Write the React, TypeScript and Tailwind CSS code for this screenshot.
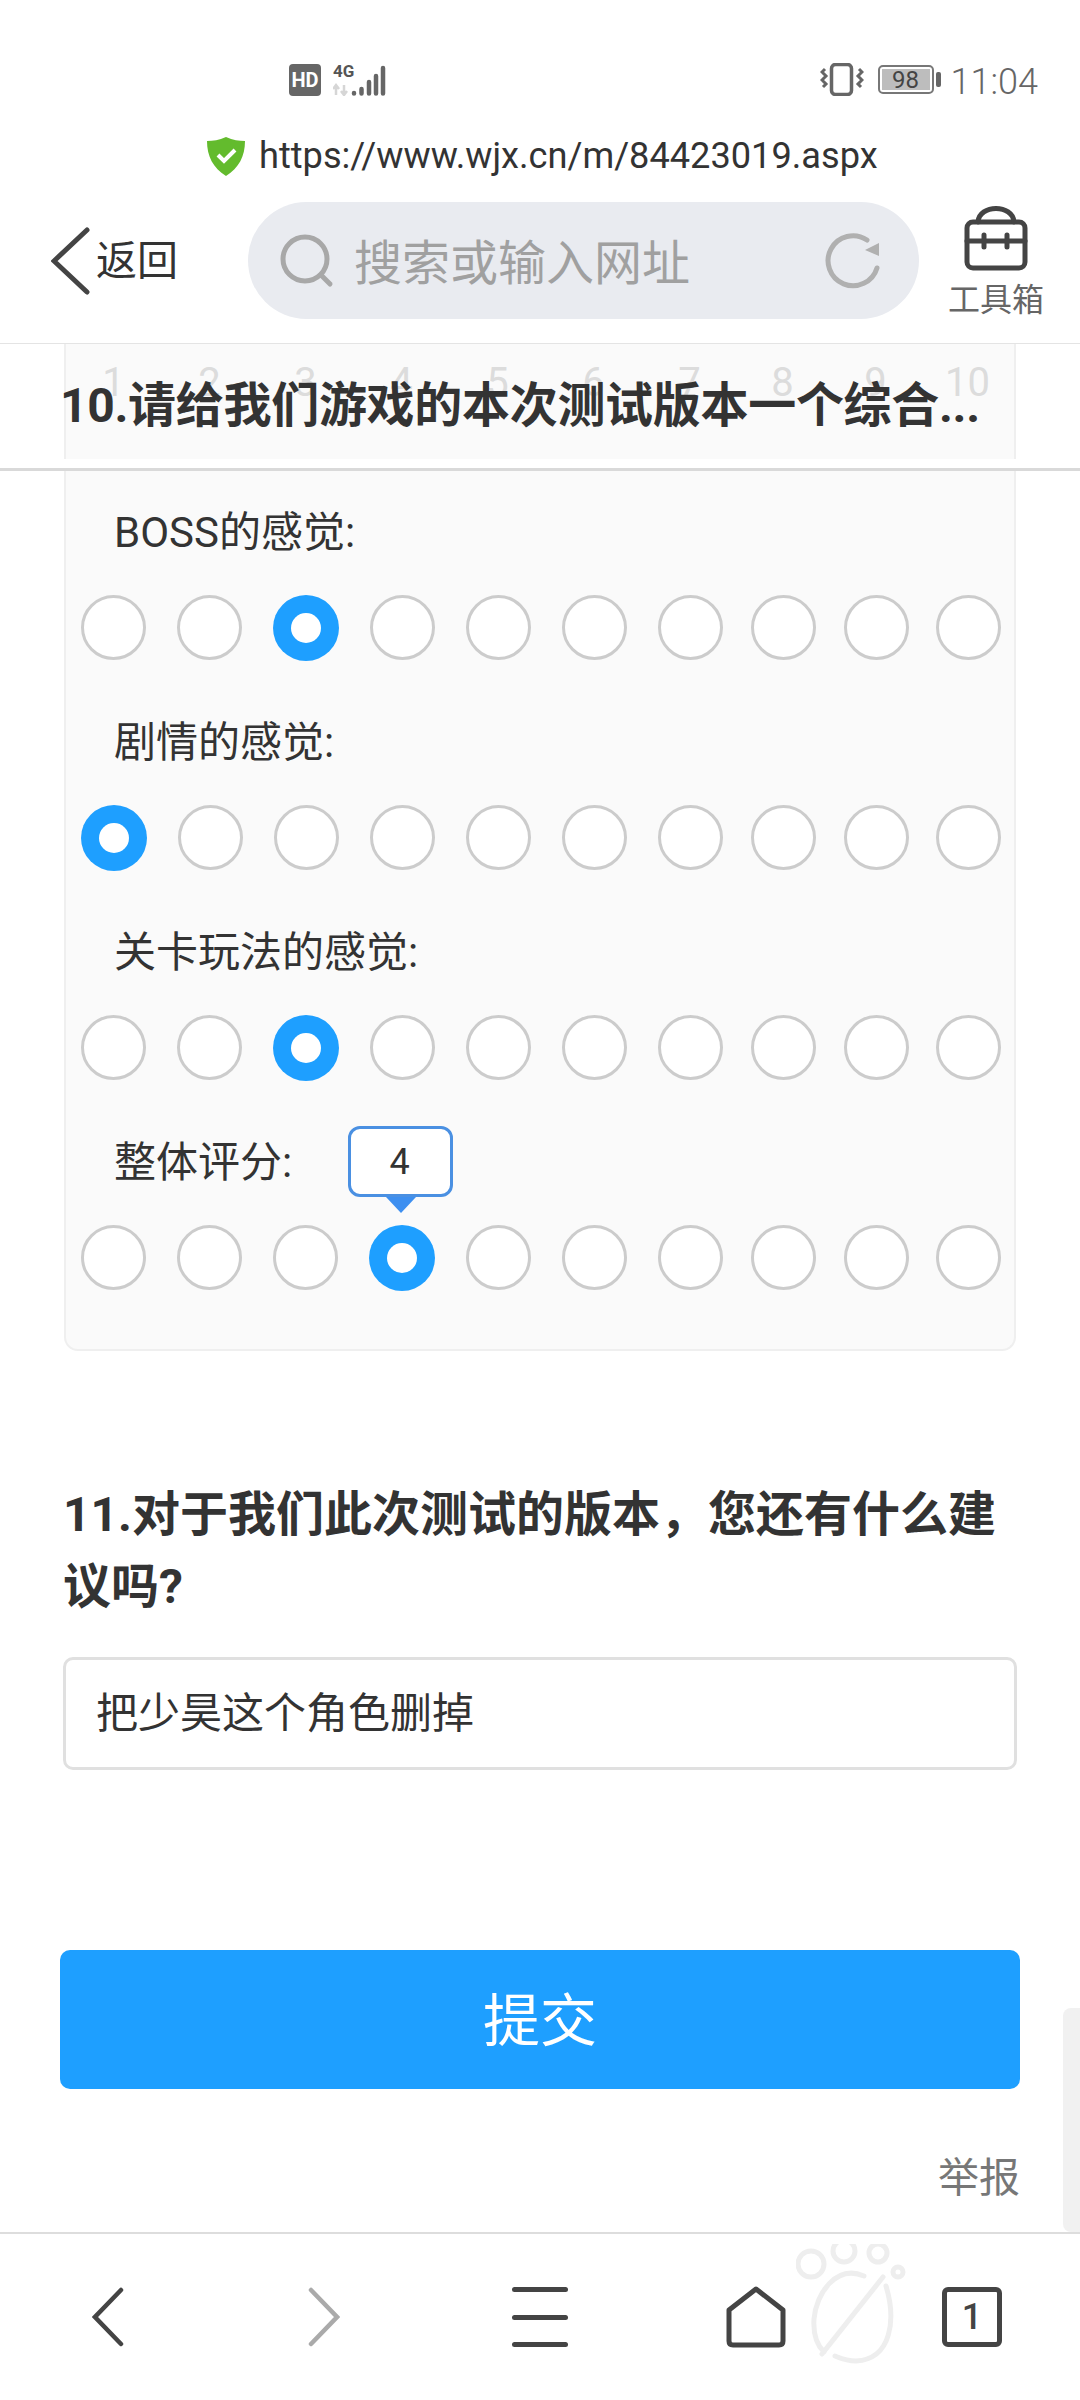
import React from "react";

const font = "font-['Roboto','Noto_Sans_CJK_SC',sans-serif]";

function Radio({ selected, className }: { selected?: boolean; className: string }) {
  return selected ? (
    <div className={`w-[66px] h-[66px] -my-[0.5px] -mx-[0.5px] shrink-0 rounded-full bg-[#1e9fff] flex items-center justify-center ${className}`}>
      <div className="w-[30px] h-[30px] rounded-full bg-white" />
    </div>
  ) : (
    <div className={`w-[65px] h-[65px] shrink-0 rounded-full bg-white border-[3px] border-[#cccccc] ${className}`} />
  );
}

const gaps = ["ml-0", "ml-[31px]", "ml-[31px]", "ml-[31px]", "ml-[31px]", "ml-[31px]", "ml-[31px]", "ml-[28px]", "ml-[28px]", "ml-[27px]"];

function RatingRow({ label, selected, tip }: { label: string; selected: number; tip?: boolean }) {
  return (
    <div className="relative">
      <div className="h-[60px] mb-[34px] pl-[48px] pt-[3px] flex items-center text-[42px] text-[#333333]">{label}</div>
      {tip && (
        <div className="absolute left-[282px] top-[-5px] flex flex-col items-center">
          <div className="w-[105px] h-[71px] bg-white border-[3px] border-[#4a90e2] rounded-[12px] flex items-center justify-center pr-[2px] text-[36px] text-[#333333]">
            4
          </div>
          <div className="w-0 h-0 border-l-[15px] border-r-[15px] border-t-[16px] border-l-transparent border-r-transparent border-t-[#3d8ff0]" />
        </div>
      )}
      <div className="flex pl-[15px]">
        {gaps.map((g, i) => (
          <Radio key={i} selected={i === selected} className={g} />
        ))}
      </div>
    </div>
  );
}

export default function App() {
  return (
    <div className={`w-[1080px] h-[2400px] bg-white flex flex-col overflow-hidden ${font}`}>
      {/* status bar */}
      <div className="h-[124px] shrink-0 flex items-start pt-[64px] pl-[289px] pr-[42px] text-[#666666]">
        <div className="w-[32px] h-[32px] rounded-[4px] bg-[#666666] text-white text-[20px] font-bold flex items-center justify-center">HD</div>
        <svg className="ml-[12px]" width="54" height="32" viewBox="0 0 54 32">
          <path d="M3 31V21M0 25l3-4 3 4M11 21v10M8 27l3 4 3-4" stroke="#d6d6d6" strokeWidth="2.500" fill="none" />
          <g stroke="#666666" strokeWidth="4.500" strokeLinecap="round">
            <path d="M21 29v0.500M28.500 25v4.500M36 18v11.500M43 12v17.500M50 4v25.500" />
          </g>
        </svg>
        <div className="ml-[-54px] mt-[-2px] w-[24px] text-[17px] leading-[18px] font-bold text-[#555555]">4G</div>
        <div className="ml-auto flex items-start">
          <svg className="mt-[-1px]" width="44" height="33" viewBox="0 0 44 33" fill="none" stroke="#666666">
            <rect x="11.500" y="1.500" width="20" height="30" rx="4" strokeWidth="3.500" />
            <path d="M5 6l-3 3 4 4-4 4 4 4-3 3M39 6l3 3-4 4 4 4-4 4 3 3" strokeWidth="3" />
          </svg>
          <div className="ml-[14px] flex items-center mt-[1px]">
            <div className="w-[56px] h-[29px] border-[2px] border-[#777777] rounded-[5px] p-[2px] flex">
              <div className="flex-1 bg-[#bdbdbd] flex items-center justify-center text-[24px] text-[#444444]">98</div>
            </div>
            <div className="ml-[2px] w-[5px] h-[15px] rounded-[2px] bg-[#666666]" />
          </div>
          <div className="ml-[10px] text-[36px] leading-[36px] text-[#666666] font-light">11:04</div>
        </div>
      </div>
      {/* url */}
      <div className="h-[64px] shrink-0 flex items-center pl-[207px]">
        <svg width="38" height="40" viewBox="0 0 38 40">
          <path d="M19 1C26 4 32 5 38 5C38 20 32 32 19 40C6 32 0 20 0 5C6 5 12 4 19 1Z" fill="#63bb2d" />
          <path d="M11 19l6 6 11-11" fill="none" stroke="#ffffff" strokeWidth="4" />
        </svg>
        <div className="ml-[14px] text-[36.200px] leading-[44px] text-[#333333]">https://www.wjx.cn/m/84423019.aspx</div>
      </div>
      {/* toolbar */}
      <div className="h-[156px] shrink-0 flex items-start pt-[14px] border-b border-[#e4e4e4]">
        <div className="w-[248px] h-[117px] shrink-0 flex items-center pl-[51px]">
          <svg width="39" height="68" viewBox="0 0 39 68" fill="none" stroke="#444444" strokeWidth="5" strokeLinecap="round">
            <path d="M36 3L3 34l33 31" />
          </svg>
          <span className="ml-[6px] mt-[3px] text-[41px] text-[#333333]">返回</span>
        </div>
        <div className="w-[671px] h-[117px] shrink-0 rounded-full bg-[#e9ebf0] flex items-center pl-[32px] pr-[37px]">
          <svg width="54" height="54" viewBox="0 0 54 54" fill="none" stroke="#a8a8a8" strokeWidth="5" strokeLinecap="round">
            <circle cx="25" cy="25" r="22" />
            <path d="M41 41l9 9" />
          </svg>
          <span className="ml-[20px] mt-[6px] text-[48px] text-[#a0a0a0]">搜索或输入网址</span>
          <svg className="ml-auto" width="58" height="58" viewBox="0 0 58 58" fill="none">
            <path d="M53 36A25 25 0 1 1 43 8" stroke="#b0b0b0" strokeWidth="5" strokeLinecap="round" />
            <path d="M55 11v13L41 18z" fill="#b0b0b0" />
          </svg>
        </div>
        <div className="ml-[29px] w-[96px] flex flex-col items-center">
          <svg className="mt-[2px]" width="66" height="68" viewBox="0 0 66 68" fill="none" stroke="#444444" strokeWidth="5" strokeLinecap="round">
            <rect x="4" y="18" width="58" height="46" rx="6" />
            <path d="M15 18C16 0 50 0 51 18M4 37h58M21 31v12M44 31v12" />
          </svg>
          <div className="mt-[10px] text-[32px] leading-[36px] whitespace-nowrap text-[#666666]">工具箱</div>
        </div>
      </div>
      {/* content */}
      <div className="relative flex-1 min-h-0 overflow-hidden">
        <div className="ml-[64px] w-[952px] bg-[#fafafa] border-2 border-t-0 border-[#efefef] rounded-b-[14px] pt-[6px] pb-[9px]">
          <div className="h-[60px] flex pl-[15px] mb-[91px] pt-[3px]">
            {gaps.map((g, i) => (
              <div key={i} className={`w-[65px] shrink-0 text-center text-[40px] leading-[60px] text-[#dcdcdc] ${g}`}>
                {i + 1}
              </div>
            ))}
          </div>
          <div className="flex flex-col gap-[51px]">
            <RatingRow label="BOSS的感觉:" selected={2} />
            <RatingRow label="剧情的感觉:" selected={0} />
            <RatingRow label="关卡玩法的感觉:" selected={2} />
            <RatingRow label="整体评分:" selected={3} tip />
          </div>
          <div className="h-[50px]" />
        </div>
        <div className="mt-[128px] ml-[63px] mr-[62px] text-[48px] leading-[72px] font-bold text-[#333333]">
          11.对于我们此次测试的版本，您还有什么建议吗?
        </div>
        <div className="mt-[34px] mx-[63px] h-[113px] border-[3px] border-[#e0e0e0] rounded-[10px] flex items-center pl-[30px] text-[42px] text-[#333333]">
          把少昊这个角色删掉
        </div>
        <div className="mt-[180px] mx-[60px] h-[139px] pt-[5px] rounded-[10px] bg-[#1e9fff] flex items-center justify-center text-[57px] text-white">
          提交
        </div>
        <div className="mt-[65px] mr-[60px] h-[50px] flex items-center justify-end text-[41px] text-[#777777]">举报</div>

        {/* sticky title over the scrolled card */}
        <div className="absolute left-0 right-0 top-0 flex flex-col">
          <div className="h-[115px] pt-[8px] pl-[60px] flex items-center text-[48px] tracking-[-0.3px] font-bold text-[#333333] whitespace-nowrap">
            10.请给我们游戏的本次测试版本一个综合...
          </div>
          <div className="h-[12px] bg-white border-b-[3px] border-[#d9d9d9]" />
        </div>
        {/* scrollbar */}
        <div className="absolute right-0 bottom-0 w-[17px] h-[224px] rounded-l-[8px] bg-[#f1f1f1]" />
      </div>
      {/* bottom nav */}
      <div className="relative h-[168px] shrink-0 border-t-2 border-[#dddddd] grid grid-cols-5 items-center justify-items-center">
        <svg className="absolute left-[796px] top-[10px]" width="112" height="126" viewBox="0 0 112 126" fill="none" stroke="#eeeeee" strokeWidth="5" strokeLinecap="round">
          <circle cx="15" cy="20" r="13" />
          <circle cx="48" cy="7" r="11" />
          <circle cx="82" cy="9" r="9" />
          <circle cx="102" cy="28" r="5" />
          <path d="M87 33L26 110M68 32C40 20 20 50 18 75C17 90 20 100 28 108M90 42C100 75 96 115 60 117C50 117 44 114 39 112" />
        </svg>
        <svg width="32" height="60" viewBox="0 0 32 60" fill="none" stroke="#444444" strokeWidth="4.500" strokeLinecap="round">
          <path d="M29 3L3 30l26 27" />
        </svg>
        <svg width="32" height="60" viewBox="0 0 32 60" fill="none" stroke="#aaaaaa" strokeWidth="4.500" strokeLinecap="round">
          <path d="M3 3l26 27L3 57" />
        </svg>
        <div className="w-[56px] h-[60px] flex flex-col justify-between">
          <div className="h-[5px] rounded-full bg-[#444444]" />
          <div className="h-[5px] rounded-full bg-[#444444]" />
          <div className="h-[5px] rounded-full bg-[#444444]" />
        </div>
        <svg width="60" height="62" viewBox="0 0 60 62" fill="none" stroke="#444444" strokeWidth="5" strokeLinejoin="round">
          <path d="M30 3L57 24V55Q57 59 53 59H7Q3 59 3 55V24Z" />
        </svg>
        <div className="w-[60px] h-[60px] border-[5px] border-[#444444] rounded-[6px] flex items-center justify-center text-[36px] font-medium text-[#444444]">1</div>
      </div>
    </div>
  );
}
